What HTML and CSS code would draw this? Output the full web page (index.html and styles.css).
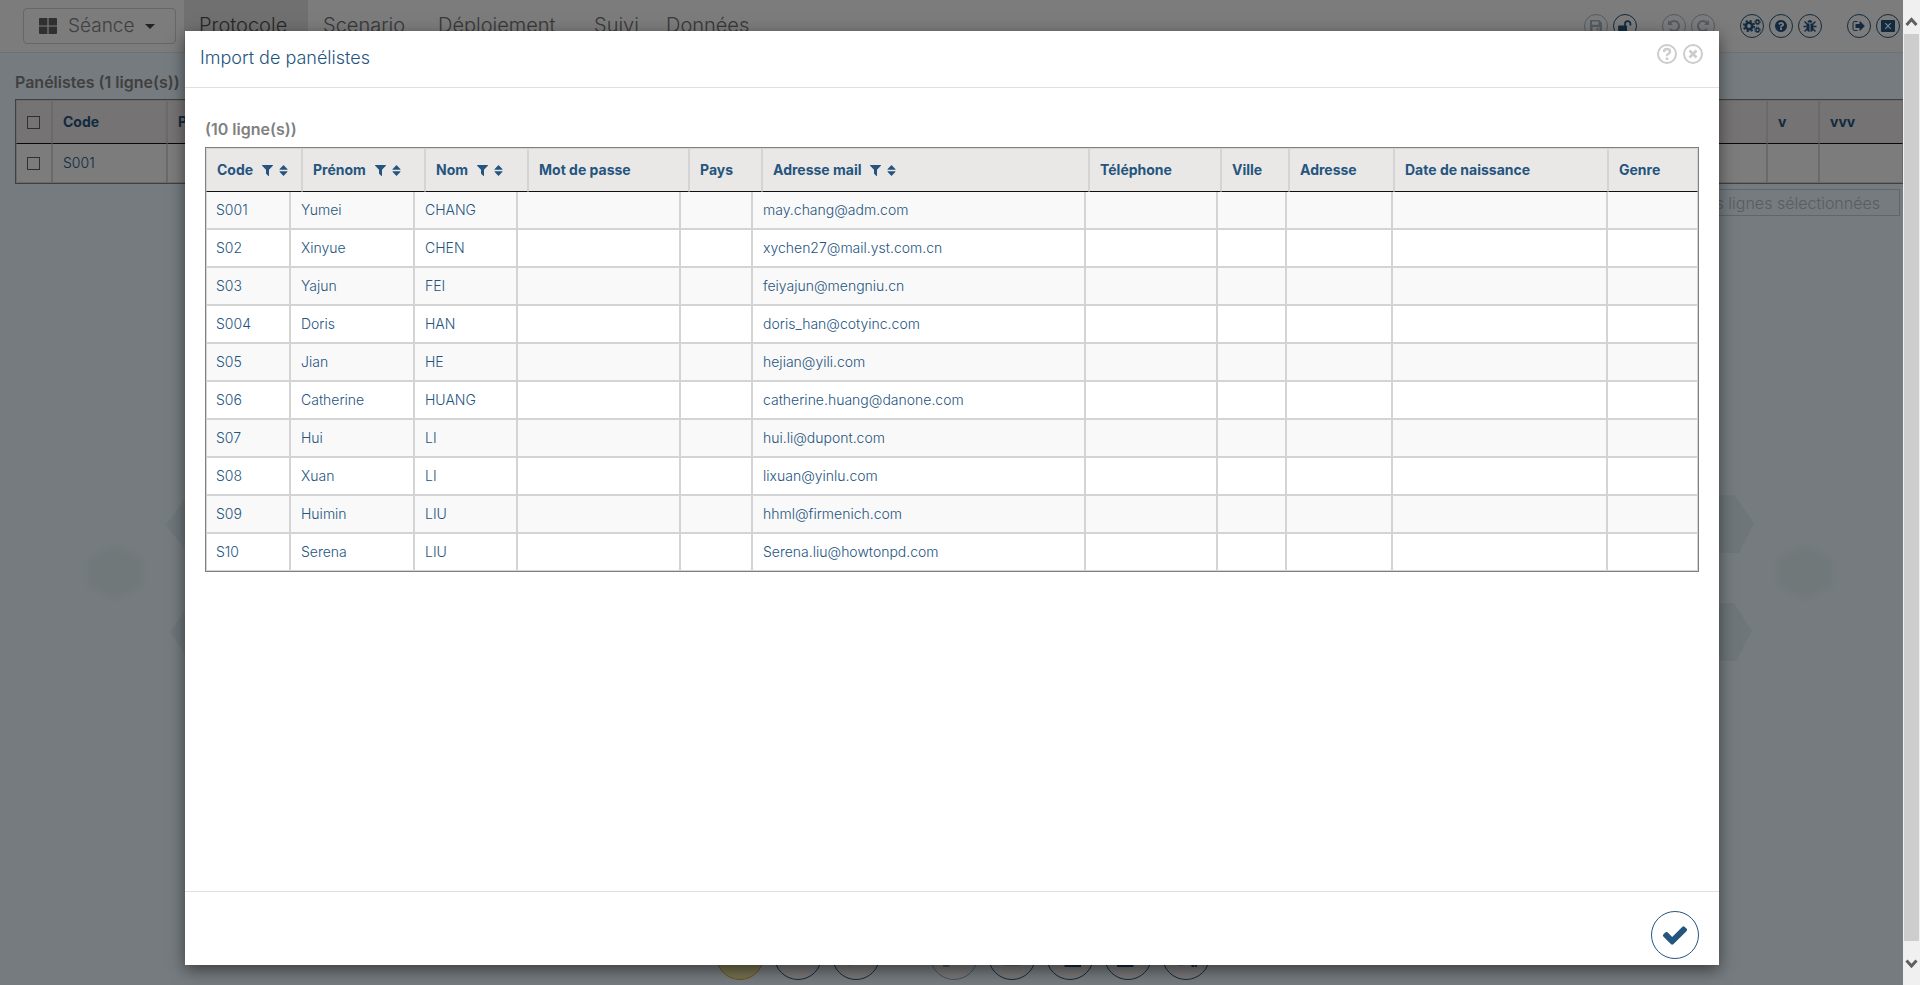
FILE: index.html
```html
<!DOCTYPE html>
<html lang="fr">
<head>
<meta charset="utf-8">
<title>Import de panélistes</title>
<link rel="stylesheet" href="styles.css">
</head>
<body>
<svg class="sprite" aria-hidden="true">
  <symbol id="filter" viewBox="192 256 1408 1408"><path d="M1595 295q17 41-14 70l-493 493v742q0 42-39 59-13 5-25 5-27 0-45-19l-256-256q-19-19-19-45v-486l-493-493q-31-29-14-70 17-39 59-39h1280q42 0 59 39z"/></symbol>
  <symbol id="sort" viewBox="0 0 10 12"><path d="M5 0l4.500 4.600q.2.700-.6.700H1.100q-.8 0-.6-.700zM5 12L.5 7.400q-.2-.7.600-.7h7.800q.8 0 .6.700z"/></symbol>
  <symbol id="check" viewBox="0 0 1792 1792"><path d="M1671 566q0 40-28 68l-724 724-136 136q-28 28-68 28t-68-28l-136-136-362-362q-28-28-28-68t28-68l136-136q28-28 68-28t68 28l294 295 656-657q28-28 68-28t68 28l136 136q28 28 28 68z"/></symbol>
  <symbol id="exit" viewBox="0 0 1792 1792"><path d="M704 1440q0 4 1 20t.5 26.500-3 23.500-10 19.500-20.500 6.500h-320q-119 0-203.500-84.500t-84.500-203.500v-704q0-119 84.500-203.500t203.500-84.500h320q13 0 22.500 9.500t9.500 22.500q0 4 1 20t.5 26.500-3 23.500-10 19.500-20.500 6.500h-320q-66 0-113 47t-47 113v704q0 66 47 113t113 47h312l11.500 1 11.500 3 8 5.500 7 9 2 13.500zm928-544q0 26-19 45l-544 544q-19 19-45 19t-45-19-19-45v-288h-448q-26 0-45-19t-19-45v-384q0-26 19-45t45-19h448v-288q0-26 19-45t45-19 45 19l544 544q19 19 19 45z"/></symbol>
  <symbol id="help" viewBox="0 0 1792 1792"><path d="M1024 1376v-192q0-14-9-23t-23-9h-192q-14 0-23 9t-9 23v192q0 14 9 23t23 9h192q14 0 23-9t9-23zm256-672q0-88-55.500-163t-138.500-116-170-41q-243 0-371 213-15 24 8 42l132 100q7 6 19 6 16 0 25-12 53-68 86-92 34-24 86-24 48 0 85.500 26t37.500 59q0 38-20 61t-68 45q-63 28-115.500 86.500t-52.500 125.500v36q0 14 9 23t23 9h192q14 0 23-9t9-23q0-19 21.500-49.500t54.500-49.500q32-18 49-28.500t46-35 44.500-48 28-60.500 12.500-81zm384 192q0 209-103 385.500t-279.500 279.500-385.500 103-385.500-103-279.500-279.500-103-385.500 103-385.500 279.500-279.500 385.500-103 385.500 103 279.500 279.500 103 385.500z"/></symbol>
  <symbol id="redo" viewBox="0 0 1792 1792"><path d="M1664 256v448q0 26-19 45t-45 19h-448q-42 0-59-40-17-39 14-69l138-138q-148-137-349-137-104 0-198.500 40.500t-163.500 109.500-109.500 163.500-40.500 198.500 40.500 198.500 109.500 163.500 163.500 109.500 198.500 40.500q119 0 225-52t179-147q7-10 23-12 15 0 25 9l137 138q9 8 9.500 20.500t-7.500 22.500q-109 132-264 204.500t-327 72.500q-156 0-298-61t-245-164-164-245-61-298 61-298 164-245 245-164 298-61q147 0 284.500 55.500t244.500 156.500l130-129q29-31 70-14 39 17 39 59z"/></symbol>
  <symbol id="save" viewBox="0 0 14 14"><path fill-rule="evenodd" d="M1.500 1h8.800L13 3.700v8.800q0 .5-.5.500h-11q-.5 0-.5-.5v-11q0-.5.500-.5zM3 2.500v3.200h6.500V2.500zM3.500 8v4h7V8zM7.500 9h1.800v2.500H7.500z"/></symbol>
  <symbol id="unlock" viewBox="0 0 16 14"><path d="M1 6.500h8.500q.8 0 .8.800v5q0 .8-.8.800H1q-.8 0-.8-.8v-5q0-.8.800-.8z"/><path d="M8 7V4.500a3 3 0 0 1 6.200 0v2" fill="none" stroke="currentColor" stroke-width="2"/></symbol>
  <symbol id="cogs" viewBox="0 0 18 14"><g fill="none" stroke="currentColor"><circle cx="6" cy="7" r="3.200" stroke-width="2.600"/><circle cx="6" cy="7" r="5.200" stroke-width="1.800" stroke-dasharray="2.200 1.884"/><circle cx="14.500" cy="3" r="1.700" stroke-width="1.400"/><circle cx="14.500" cy="3" r="2.800" stroke-width="1" stroke-dasharray="1.200 1"/><circle cx="14.500" cy="11" r="1.700" stroke-width="1.400"/><circle cx="14.500" cy="11" r="2.800" stroke-width="1" stroke-dasharray="1.200 1"/></g></symbol>
  <symbol id="bug" viewBox="0 0 14 14"><path d="M4.500 3.500a2.500 2.500 0 0 1 5 0zM3.500 4.500h3v8.500q-3-.5-3-4zM7.500 4.500h3V9q0 3.500-3 4z"/><path d="M1.500 2.500l2.500 2.500M12.500 2.500L10 5M.5 7.500h3M13.500 7.500h-3M1.500 12.500L4 10M12.500 12.500L10 10" fill="none" stroke="currentColor" stroke-width="1.400"/></symbol>
  <symbol id="close-box" viewBox="0 0 14 14"><path fill-rule="evenodd" d="M1 1h12q1 0 1 1v10q0 1-1 1H1q-1 0-1-1V2q0-1 1-1zM4.600 3.800L3.800 4.600 6.200 7 3.800 9.400l.8.800L7 7.900l2.400 2.300.8-.8L7.800 7l2.400-2.400-.8-.8L7 6.100z" stroke="none"/></symbol>
</svg>

<div class="screen">
  <div class="page">
    <header class="topbar">
      <button class="session" type="button">
        <svg class="session-icon" viewBox="0 0 18 16" aria-hidden="true"><path d="M0 1q0-1 1-1h7.400v7.500H0zM9.600 0H17q1 0 1 1v6.500H9.600zM0 8.600h8.400V16H1q-1 0-1-1zM9.600 8.600H18V15q0 1-1 1H9.600z"/></svg>
        <span>Séance</span>
        <span class="caret"></span>
      </button>
      <nav class="tabs">
        <a class="tab tab-protocol active" href="#">Protocole</a>
        <a class="tab tab-scenario" href="#">Scenario</a>
        <a class="tab tab-deploy" href="#">Déploiement</a>
        <a class="tab tab-follow" href="#">Suivi</a>
        <a class="tab tab-data" href="#">Données</a>
      </nav>
      <div class="tools">
        <div class="tool-group">
          <button class="tool" type="button" disabled aria-label="Enregistrer"><svg><use href="#save"/></svg></button>
          <button class="tool" type="button" aria-label="Déverrouiller"><svg><use href="#unlock"/></svg></button>
        </div>
        <div class="tool-group">
          <button class="tool mirrored" type="button" disabled aria-label="Annuler"><svg><use href="#redo"/></svg></button>
          <button class="tool" type="button" disabled aria-label="Rétablir"><svg><use href="#redo"/></svg></button>
        </div>
        <div class="tool-group">
          <button class="tool" type="button" aria-label="Paramètres"><svg class="wide"><use href="#cogs"/></svg></button>
          <button class="tool" type="button" aria-label="Aide"><svg><use href="#help"/></svg></button>
          <button class="tool" type="button" aria-label="Signaler un problème"><svg><use href="#bug"/></svg></button>
        </div>
        <div class="tool-group">
          <button class="tool" type="button" aria-label="Se déconnecter"><svg><use href="#exit"/></svg></button>
          <button class="tool" type="button" aria-label="Quitter"><svg><use href="#close-box"/></svg></button>
        </div>
      </div>
    </header>

    <main class="workspace">
      <svg class="pattern" viewBox="0 0 1920 300" aria-hidden="true">
        <g class="hex-near"><path d="M166 76l22-30h60v59h-60zM170 183l20-29h60v59h-60zM1754 74l-20-28h-60v58h65zM1752 182l-18-28h-60v58h62z"/></g>
        <g class="hex-far"><path d="M115 96l27 14v27l-27 14-27-14v-27zM1805 96l27 14v27l-27 14-27-14v-27z"/></g>
      </svg>
      <h2 class="grid-title">Panélistes (1 ligne(s))</h2>
      <table class="panel-grid">
        <thead>
          <tr><th><input type="checkbox" aria-label="Tout sélectionner"></th><th>Code</th><th>Prénom</th><th>v</th><th>vvv</th></tr>
        </thead>
        <tbody>
          <tr><td><input type="checkbox" aria-label="Sélectionner S001"></td><td>S001</td><td></td><td></td><td></td></tr>
        </tbody>
      </table>
      <div class="grid-actions"><button class="delete-rows" type="button" disabled>Supprimer les lignes sélectionnées</button></div>
    </main>

    <footer class="dock">
      <div class="dock-group">
        <button class="dock-button current" type="button" aria-label="Panélistes"><svg viewBox="0 0 24 24"><path d="M3 13h18v7q0 1-1 1H4q-1 0-1-1z"/></svg></button>
        <button class="dock-button" type="button" aria-label="Produits"><svg viewBox="0 0 24 24"><path d="M0 19h24M0 20h24" stroke="currentColor" stroke-dasharray="2 1"/></svg></button>
        <button class="dock-button" type="button" aria-label="Questions"><svg viewBox="0 0 24 24"><path d="M0 10h24v9H9l-3 3H4v-3H0z"/></svg></button>
      </div>
      <div class="dock-group">
        <button class="dock-button" type="button" disabled aria-label="Modifier"><svg viewBox="0 0 24 24"><path d="M0 24v-8l8-7 8 8-7 3H7v4z"/></svg></button>
        <button class="dock-button" type="button" aria-label="Ajouter"><svg viewBox="0 0 24 24"><path d="M2 8h20v12q0 2-2 2H4q-2 0-2-2z"/></svg></button>
        <button class="dock-button" type="button" aria-label="Importer"><svg viewBox="0 0 24 24"><path d="M6 8h18v16H6z"/></svg></button>
        <button class="dock-button" type="button" aria-label="Exporter"><svg viewBox="0 0 24 24"><path d="M0 8h18v16H0z"/></svg></button>
        <button class="dock-button" type="button" aria-label="Codes"><svg viewBox="0 0 24 24"><path d="M4 8h5v14H4zM18 8h3v16h-3zM22 8h2v16h-2zM16 20h8v2h-8z"/></svg></button>
      </div>
    </footer>

    <div class="overlay">
      <section class="dialog" role="dialog" aria-labelledby="dialog-title">
        <header class="dialog-header">
          <h1 id="dialog-title">Import de panélistes</h1>
          <div class="dialog-tools">
            <button type="button" aria-label="Aide"><svg viewBox="0 0 20 20"><circle cx="10" cy="10" r="9"/><path d="M7 8q0-3 3-3t3 2.500q0 1.500-1.700 2.500T10 12M10 13.500V16" stroke-width="2.400"/></svg></button>
            <button type="button" aria-label="Fermer"><svg viewBox="0 0 20 20"><circle cx="10" cy="10" r="9"/><path d="M6.500 6.500l7 7M13.500 6.500l-7 7" stroke-width="2.600"/></svg></button>
          </div>
        </header>
        <div class="dialog-body">
          <h2 class="grid-title">(10 ligne(s))</h2>
          <table class="import-grid">
            <thead>
              <tr>
                <th><span class="head">Code <button type="button" aria-label="Filtrer par code"><svg class="filter"><use href="#filter"/></svg></button><button type="button" aria-label="Trier par code"><svg class="sort"><use href="#sort"/></svg></button></span></th>
                <th><span class="head">Prénom <button type="button" aria-label="Filtrer par prénom"><svg class="filter"><use href="#filter"/></svg></button><button type="button" aria-label="Trier par prénom"><svg class="sort"><use href="#sort"/></svg></button></span></th>
                <th><span class="head">Nom <button type="button" aria-label="Filtrer par nom"><svg class="filter"><use href="#filter"/></svg></button><button type="button" aria-label="Trier par nom"><svg class="sort"><use href="#sort"/></svg></button></span></th>
                <th>Mot de passe</th>
                <th>Pays</th>
                <th><span class="head">Adresse mail <button type="button" aria-label="Filtrer par adresse mail"><svg class="filter"><use href="#filter"/></svg></button><button type="button" aria-label="Trier par adresse mail"><svg class="sort"><use href="#sort"/></svg></button></span></th>
                <th>Téléphone</th>
                <th>Ville</th>
                <th>Adresse</th>
                <th>Date de naissance</th>
                <th>Genre</th>
              </tr>
            </thead>
            <tbody>
              <tr><td>S001</td><td>Yumei</td><td>CHANG</td><td></td><td></td><td>may.chang@adm.com</td><td></td><td></td><td></td><td></td><td></td></tr>
              <tr><td>S02</td><td>Xinyue</td><td>CHEN</td><td></td><td></td><td>xychen27@mail.yst.com.cn</td><td></td><td></td><td></td><td></td><td></td></tr>
              <tr><td>S03</td><td>Yajun</td><td>FEI</td><td></td><td></td><td>feiyajun@mengniu.cn</td><td></td><td></td><td></td><td></td><td></td></tr>
              <tr><td>S004</td><td>Doris</td><td>HAN</td><td></td><td></td><td>doris_han@cotyinc.com</td><td></td><td></td><td></td><td></td><td></td></tr>
              <tr><td>S05</td><td>Jian</td><td>HE</td><td></td><td></td><td>hejian@yili.com</td><td></td><td></td><td></td><td></td><td></td></tr>
              <tr><td>S06</td><td>Catherine</td><td>HUANG</td><td></td><td></td><td>catherine.huang@danone.com</td><td></td><td></td><td></td><td></td><td></td></tr>
              <tr><td>S07</td><td>Hui</td><td>LI</td><td></td><td></td><td>hui.li@dupont.com</td><td></td><td></td><td></td><td></td><td></td></tr>
              <tr><td>S08</td><td>Xuan</td><td>LI</td><td></td><td></td><td>lixuan@yinlu.com</td><td></td><td></td><td></td><td></td><td></td></tr>
              <tr><td>S09</td><td>Huimin</td><td>LIU</td><td></td><td></td><td>hhml@firmenich.com</td><td></td><td></td><td></td><td></td><td></td></tr>
              <tr><td>S10</td><td>Serena</td><td>LIU</td><td></td><td></td><td>Serena.liu@howtonpd.com</td><td></td><td></td><td></td><td></td><td></td></tr>
            </tbody>
          </table>
        </div>
        <footer class="dialog-footer">
          <button class="confirm" type="button" aria-label="Valider"><svg><use href="#check"/></svg></button>
        </footer>
      </section>
    </div>
  </div>

  <div class="scrollbar" aria-hidden="true">
    <svg class="arrow" viewBox="0 0 17 34"><path d="M3.500 25l5-5.500 5 5.500"/></svg>
    <div class="thumb"></div>
    <svg class="arrow arrow-down" viewBox="0 0 17 44"><path d="M3.500 19.500l5 5.500 5-5.500"/></svg>
  </div>
</div>
</body>
</html>
```
FILE: styles.css
```css
* { box-sizing: border-box; }

body {
  margin: 0;
  font: 300 14px/20px Inter, "Open Sans", sans-serif;
  color: #25557f;
}

h1, h2 { margin: 0; }

button {
  padding: 0;
  border: 0;
  background: none;
  color: inherit;
  font: inherit;
}

svg { display: block; fill: currentColor; }

.sprite { position: absolute; width: 0; height: 0; }

.screen {
  display: flex;
  height: 100vh;
  overflow: hidden;
}

.page {
  position: relative;
  flex: 1;
  min-width: 0;
  display: flex;
  flex-direction: column;
  background: #ebf7ff;
  overflow: hidden;
}

/* Top bar */
.topbar {
  display: flex;
  align-items: flex-start;
  height: 53px;
  padding-right: 3px;
  background: #f8f8f8;
  border-bottom: 1px solid #e0e0e0;
}

.session {
  display: flex;
  align-items: center;
  gap: 11px;
  width: 153px;
  height: 36px;
  margin: 8px 8px 0 23px;
  padding-left: 15px;
  border: 1px solid #ccc;
  border-radius: 4px;
  color: #808080;
  font-size: 19px;
}

.session-icon { width: 18px; height: 16px; color: #606060; }

.caret {
  border: 5px solid transparent;
  border-top-color: #444;
  border-bottom: 0;
}

.tabs { display: flex; height: 52px; }

.tab {
  padding: 13px 0 0 15px;
  color: #707070;
  font-size: 20px;
  line-height: 24px;
  text-decoration: none;
}

.tab.active { background: #e0e0e0; color: #505050; }
.tab-protocol { width: 124px; }
.tab-scenario { width: 115px; }
.tab-deploy { width: 156px; }
.tab-follow { width: 72px; }
.tab-data { width: 115px; }

.tools {
  display: flex;
  gap: 25px;
  margin: 14px 0 0 auto;
}

.tool-group { display: flex; gap: 5px; }

.tool {
  display: grid;
  place-items: center;
  width: 24px;
  height: 24px;
  border: 1px solid;
  border-radius: 50%;
}

.tool svg { width: 14px; height: 14px; }
.tool svg.wide { width: 18px; }
.tool:disabled { opacity: 0.4; }
.mirrored svg { transform: scaleX(-1); }

/* Workspace behind the dialog */
.workspace { position: relative; flex: 1; padding: 19px 0 0 15px; }

.pattern {
  position: absolute;
  top: 396px;
  left: 0;
  width: 1920px;
  height: 300px;
}

.hex-near { fill: #dcedf2; }
.hex-far { fill: #e2f0f5; filter: blur(3px); }

.grid-title {
  color: #808080;
  font-size: 16px;
  line-height: 20px;
  font-weight: 600;
}

.panel-grid {
  width: 100%;
  margin-top: 7px;
  table-layout: fixed;
  border: 1px solid #808080;
  border-right: 0;
  border-spacing: 0;
  text-align: left;
}

.panel-grid th,
.panel-grid td {
  padding: 0 10px;
  border: 1px solid #d4d4d4;
  background: #f8f8f8;
}

.panel-grid th {
  height: 44px;
  border-bottom-color: #111;
  background: #ece6e8;
  font-weight: 700;
}

.panel-grid td { height: 39px; border-top: 0; }
.panel-grid th:nth-child(1) { width: 36px; }
.panel-grid th:nth-child(2) { width: 115px; }
.panel-grid th:nth-child(4) { width: 52px; }
.panel-grid th:nth-child(5) { width: 84px; }

.panel-grid input {
  appearance: none;
  display: block;
  width: 13px;
  height: 13px;
  margin: 0;
  border: 1px solid #606060;
}

.grid-actions {
  display: flex;
  justify-content: flex-end;
  padding: 5px 3px 0 0;
}

.delete-rows {
  height: 27px;
  padding: 0 19px;
  border: 1px solid #c0ccd2;
  color: #b0bcc2;
  font-size: 16px;
}

.dock {
  display: flex;
  justify-content: center;
  gap: 50px;
  padding: 0 0 5px 22px;
}

.dock-group { display: flex; gap: 10px; }

.dock-button {
  display: grid;
  place-items: center;
  width: 48px;
  height: 48px;
  border: 1px solid;
  border-radius: 50%;
  background: #f4f0f1;
}

.dock-button svg { width: 22px; height: 22px; }
.dock-button:disabled { border-color: #8fa9bd; color: #8fa9bd; }
.dock-button.current { border-color: #e0a040; background: #ebe3a0; }
.dock-button.current svg { color: #25557f; }

/* Dialog */
.overlay {
  position: absolute;
  inset: 0;
  display: flex;
  padding: 31px 184px 20px 185px;
  background: rgba(0, 0, 0, 0.5);
}

.dialog {
  flex: 1;
  min-width: 0;
  display: flex;
  flex-direction: column;
  background: #fff;
  box-shadow: 0 5px 15px rgba(0, 0, 0, 0.5);
}

.dialog-header {
  display: flex;
  align-items: flex-start;
  justify-content: space-between;
  padding: 13px 16px 15px 15px;
  border-bottom: 1px solid #e0e0e0;
}

.dialog-header h1 {
  font-size: 18px;
  line-height: 28px;
  font-weight: 300;
}

.dialog-tools { display: flex; gap: 6px; color: #ccc; }

.dialog-tools svg {
  width: 20px;
  height: 20px;
  fill: none;
  stroke: currentColor;
  stroke-width: 2;
}

.dialog-body { flex: 1; padding: 31px 20px 20px; }

.import-grid {
  display: block;
  margin-top: 8px;
  border: 1px solid #808080;
  text-align: left;
}

.import-grid thead,
.import-grid tbody {
  display: table;
  width: 100%;
  table-layout: fixed;
  border-spacing: 0;
}

.import-grid th,
.import-grid td {
  padding: 0 10px;
  border: 1px solid #d4d4d4;
  white-space: nowrap;
}

.import-grid td { height: 38px; }
.import-grid td:first-child { padding-left: 9px; }

.import-grid th {
  height: 44px;
  border-bottom-color: #111;
  background: #e9e8e6;
  font-weight: 700;
}

.import-grid tbody tr:first-child td { height: 37px; border-top: 0; }
.import-grid tbody tr:nth-child(odd) { background: #f9f9f9; }

.head { display: flex; align-items: center; gap: 6px; }
.head button:first-of-type { margin-left: 3px; }
.filter { width: 11px; height: 11px; }
.sort { width: 9px; height: 11px; }

.import-grid th:nth-child(1) { width: 96px; }
.import-grid th:nth-child(2) { width: 123px; }
.import-grid th:nth-child(3) { width: 103px; }
.import-grid th:nth-child(4) { width: 161px; }
.import-grid th:nth-child(5) { width: 73px; }
.import-grid th:nth-child(6) { width: 327px; }
.import-grid th:nth-child(7) { width: 132px; }
.import-grid th:nth-child(8) { width: 68px; }
.import-grid th:nth-child(9) { width: 105px; }
.import-grid th:nth-child(10) { width: 214px; }
.import-grid th:nth-child(11) { width: 90px; }

.import-grid td:nth-child(1) { width: 84px; }
.import-grid td:nth-child(2) { width: 124px; }
.import-grid td:nth-child(3) { width: 103px; }
.import-grid td:nth-child(4) { width: 163px; }
.import-grid td:nth-child(5) { width: 72px; }
.import-grid td:nth-child(6) { width: 333px; }
.import-grid td:nth-child(7) { width: 132px; }
.import-grid td:nth-child(8) { width: 69px; }
.import-grid td:nth-child(9) { width: 106px; }
.import-grid td:nth-child(10) { width: 215px; }
.import-grid td:nth-child(11) { width: 91px; }

.dialog-footer {
  display: flex;
  justify-content: flex-end;
  padding: 19px 20px 6px;
  border-top: 1px solid #e0e0e0;
}

.confirm {
  display: grid;
  place-items: center;
  width: 48px;
  height: 48px;
  border: 1px solid;
  border-radius: 50%;
}

.confirm svg { width: 28px; height: 28px; }

/* Window scrollbar */
.scrollbar {
  display: flex;
  flex-direction: column;
  width: 17px;
  background: #f0f0f0;
}

.thumb { flex: 1; margin: 0 1px; background: #cdcdcd; }

.arrow {
  width: 17px;
  height: 34px;
  fill: none;
  stroke: #606060;
  stroke-width: 3;
}

.arrow-down { height: 44px; }
```
